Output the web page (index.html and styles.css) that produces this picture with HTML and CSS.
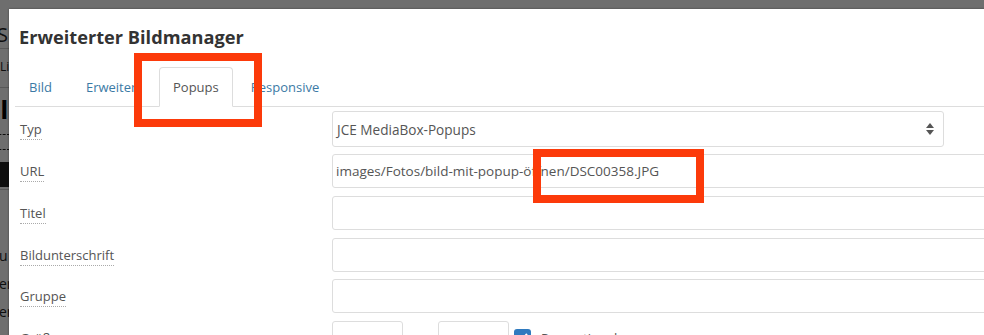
FILE: index.html
```html
<!DOCTYPE html>
<html lang="de">
  <head>
    <meta charset="utf-8" />
    <title>Erweiterter Bildmanager</title>
    <link rel="stylesheet" href="styles.css">
  </head>
  <body>
    <!-- the editor page behind the dialog, dimmed -->
    <div class="page">
      <div class="page-title">Spalten</div>
      <div class="page-line"></div>
      <div class="page-small">Link</div>
      <div class="page-line"></div>
      <div class="page-tools">III</div>
      <div class="page-dashed"></div>
      <div class="page-band"></div>
      <div class="page-line"></div>
      <div class="page-text">u</div>
      <div class="page-text">en</div>
      <div class="page-text">en</div>
    </div>
    <div class="backdrop"></div>

    <div class="modal">
      <h3 class="modal-title">Erweiterter Bildmanager</h3>

      <ul class="tabs">
        <li><a href="#">Bild</a></li>
        <li><a href="#">Erweitert</a></li>
        <li class="active"><a href="#">Popups</a></li>
        <li><a href="#">Responsive</a></li>
      </ul>

      <form class="form">
        <div class="row">
          <label class="lbl"><abbr>Typ</abbr></label>
          <div class="select">
            <span>JCE MediaBox-Popups</span>
            <svg class="arrows" width="8" height="12" viewBox="0 0 8 12">
              <path d="M4 0 L8 5 L0 5 Z" fill="#555" />
              <path d="M0 7 L8 7 L4 12 Z" fill="#555" />
            </svg>
          </div>
        </div>
        <div class="row">
          <label class="lbl"><abbr>URL</abbr></label>
          <div class="input">images/Fotos/bild-mit-popup-öffnen/DSC00358.JPG</div>
        </div>
        <div class="row">
          <label class="lbl"><abbr>Titel</abbr></label>
          <div class="input"></div>
        </div>
        <div class="row">
          <label class="lbl"><abbr>Bildunterschrift</abbr></label>
          <div class="input"></div>
        </div>
        <div class="row">
          <label class="lbl"><abbr>Gruppe</abbr></label>
          <div class="input"></div>
        </div>
        <div class="row">
          <label class="lbl"><abbr>Größe</abbr></label>
          <div class="size">
            <div class="input small"></div>
            <span class="times">x</span>
            <div class="input small"></div>
            <span class="check">
              <svg width="11" height="9" viewBox="0 0 11 9"><path d="M1 4.5 L4 7.5 L10 1" stroke="#fff" stroke-width="2" fill="none" /></svg>
            </span>
            <span class="check-label">Proportional</span>
          </div>
        </div>
      </form>
    </div>

    <!-- red annotation boxes drawn over the screenshot -->
    <div class="mark mark-tab"></div>
    <div class="mark mark-url"></div>
  </body>
</html>
```

FILE: styles.css
```css
html, body {
  margin: 0;
  height: 100%;
  overflow: hidden;
}

body {
  position: relative;
  background: #fff;
  font-family: "Open Sans", "Liberation Sans", sans-serif;
  color: #555;
}

/* page behind the dialog, only a thin strip of it shows */
.page {
  width: 9px;
  overflow: hidden;
  padding-top: 24px;
  color: #222;
}

.page-title {
  font-size: 20px;
  line-height: 22px;
  margin-left: -3px;
}

.page-line {
  height: 1px;
  background: #ccc;
  margin: 2px 0 0;
}

.page-small {
  font-size: 12px;
  line-height: 36px;
}

.page-tools {
  font-size: 26px;
  font-weight: bold;
  line-height: 30px;
  margin-top: 6px;
  color: #000;
}

.page-dashed {
  width: 14px;
  height: 14px;
  border: 1px dashed #222;
  margin: 10px 0 0 -6px;
}

.page-band {
  height: 25px;
  background: #222;
  margin-top: 12px;
}

.page-line + .page-text {
  margin-top: 52px;
}

.page-text {
  font-size: 14px;
  line-height: 28px;
  margin-left: -1px;
}

.backdrop {
  position: absolute;
  inset: 0;
  background: rgba(0, 0, 0, 0.57);
}

/* dialog */
.modal {
  position: absolute;
  left: 9px;
  top: 9px;
  width: 1100px;
  height: 400px;
  background: #fff;
  box-shadow: 0 0 2px rgba(0, 0, 0, 0.4);
}

.modal-title {
  margin: 16px 0 0 10px;
  font-size: 18.2px;
  line-height: 24px;
  font-weight: 700;
  color: #333;
}

.tabs {
  display: flex;
  list-style: none;
  margin: 18px 0 0 6px;
  padding: 0;
  border-bottom: 1px solid #ddd;
}

.tabs li {
  margin-right: 4px;
}

.tabs li:first-child {
  margin-right: 6px;
}

.tabs a {
  display: block;
  padding: 10px 13px;
  line-height: 18px;
  font-size: 13px;
  color: #3b7aa5;
  text-decoration: none;
  border: 1px solid transparent;
  border-radius: 4px 4px 0 0;
  margin-bottom: -1px;
}

.tabs .active a {
  color: #555;
  background: #fff;
  border-color: #ddd;
  border-bottom-color: #fff;
}

.form {
  padding: 4px 0 0 11px;
}

.row {
  display: flex;
  align-items: center;
  margin-bottom: 7.75px;
}

.row:first-child {
  margin-bottom: 7px;
}

.lbl {
  width: 312px;
  flex: none;
  font-size: 13px;
}

.lbl abbr {
  text-decoration: none;
  border-bottom: 1px dotted #aaa;
  padding-bottom: 1px;
}

.select {
  position: relative;
  width: 612px;
  height: 36px;
  box-sizing: border-box;
  border: 1px solid #ddd;
  border-radius: 3px;
  padding-left: 4px;
  display: flex;
  align-items: center;
  font-size: 13.6px;
}

.select .arrows {
  position: absolute;
  right: 9px;
  top: 11px;
}

.input {
  flex: 1;
  height: 34px;
  box-sizing: border-box;
  border: 1px solid #ddd;
  border-radius: 3px;
  padding-left: 3px;
  display: flex;
  align-items: center;
  font-size: 13.5px;
}

.size {
  flex: 1;
  display: flex;
  align-items: flex-start;
}

.input.small {
  flex: none;
  width: 71px;
}

.times {
  width: 35px;
  text-align: center;
  line-height: 34px;
  font-size: 13px;
}

.check {
  width: 17px;
  height: 17px;
  margin: 8px 0 0 5px;
  border-radius: 3px;
  background: #2f7abf;
  display: flex;
  align-items: center;
  justify-content: center;
}

.check-label {
  margin-left: 10px;
  font-size: 13px;
  line-height: 34px;
}

/* annotation */
.mark {
  position: absolute;
  border: 8px solid #fc3a0a;
  box-sizing: border-box;
}

.mark-tab {
  left: 134px;
  top: 53px;
  width: 128px;
  height: 74px;
}

.mark-url {
  left: 533px;
  top: 149px;
  width: 171px;
  height: 54px;
}
```
